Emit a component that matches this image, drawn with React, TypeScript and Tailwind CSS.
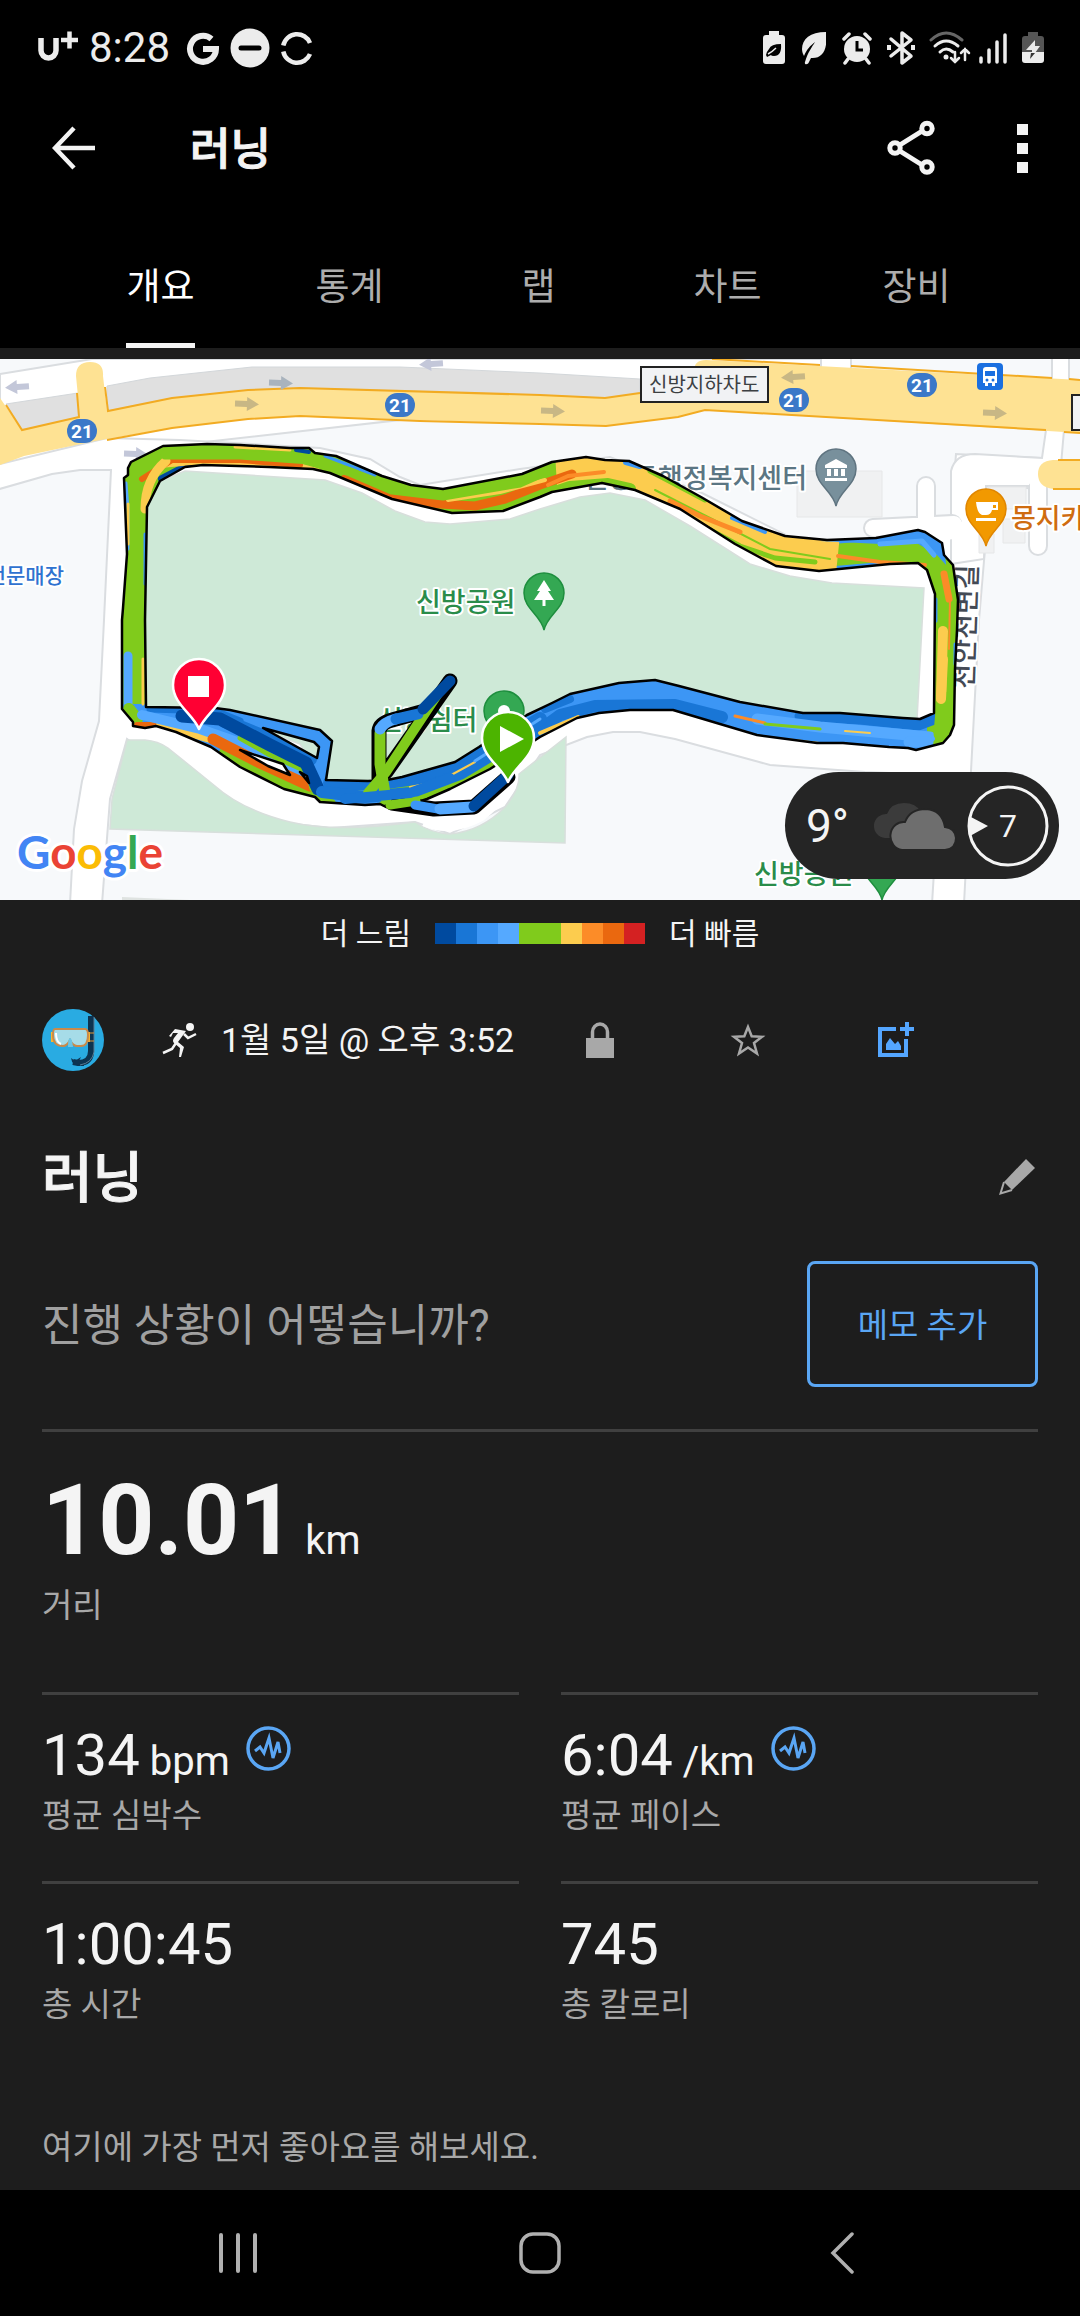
import { useState } from 'react';
import type { ReactNode } from 'react';

const tabs = ['개요', '통계', '랩', '차트', '장비'];

const paceColors = [
  'bg-[#004a9f]',
  'bg-[#1976d6]',
  'bg-[#3c96f5]',
  'bg-[#55a9ff]',
  'bg-[#80cb1c]',
  'bg-[#80cb1c]',
  'bg-[#fccc4e]',
  'bg-[#fc8c28]',
  'bg-[#ea680f]',
  'bg-[#d42122]',
];

const metrics = [
  { value: '134', unit: 'bpm', label: '평균 심박수', chart: true },
  { value: '6:04', unit: '/km', label: '평균 페이스', chart: true },
  { value: '1:00:45', unit: '', label: '총 시간', chart: false },
  { value: '745', unit: '', label: '총 칼로리', chart: false },
];

function StatusBar() {
  return (
    <div className="flex h-24 items-center justify-between pl-9 pr-9 text-[#ececec]">
      <div className="flex items-center">
        <svg className="h-10 w-[44px]" viewBox="0 0 44 40" fill="none" stroke="currentColor">
          <path d="M5 10v12.500a7.500 7.500 0 0 0 15 0V10" strokeWidth="5.500" />
          <path d="M25 12h17M33.500 3.500v17" strokeWidth="4.500" />
        </svg>
        <span className="ml-[9px] text-[42px] leading-10">8:28</span>
        <svg className="ml-4 h-10 w-[34px]" viewBox="0 0 34 40" fill="none" stroke="currentColor" strokeWidth="6">
          <path d="M25.500 11A13 13 0 1 0 30 21H17" />
        </svg>
        <svg className="ml-[10px] h-10 w-10" viewBox="0 0 40 40">
          <circle cx="20" cy="20" r="19.500" fill="currentColor" />
          <path d="M11 20h18" stroke="#000" strokeWidth="5" strokeLinecap="round" />
        </svg>
        <svg className="ml-[10px] h-10 w-[34px]" viewBox="0 0 34 40" fill="none" stroke="currentColor" strokeWidth="4.500">
          <path d="M3.300 17.500A14 14 0 0 1 30 15M3.300 23.500A14 14 0 0 0 30 26" />
        </svg>
      </div>
      <div className="flex items-center">
        <svg className="h-9 w-[22px]" viewBox="0 0 22 36">
          <path d="M6 1h10v4h3q3 0 3 3v23q0 3-3 3H3q-3 0-3-3V8q0-3 3-3h3z" fill="currentColor" />
          <path d="M3 25q1-4 3-6 2-5 12-5 1 12-7 12-3 0-3-1l-4 2z" fill="#000" />
          <path d="M5 24q4-2 8-6" stroke="#ececec" strokeWidth="1.500" fill="none" />
        </svg>
        <svg className="ml-[17px] h-9 w-6" viewBox="0 0 24 36">
          <path d="M24 2C8 2 0 9 0 19c0 3 1 5 2 7 3-7 6-10 11-14-3 5-7 10-10 20-1 3 3 3 4 0l2-4c12 1 17-9 15-26z" fill="currentColor" />
        </svg>
        <svg className="ml-4 h-9 w-[30px]" viewBox="0 0 30 36" fill="none" stroke="currentColor">
          <circle cx="15" cy="19" r="13" fill="currentColor" stroke="none" />
          <path d="M2 9l5-5M28 9l-5-5M6 29l-3 4M24 29l3 4" strokeWidth="3.500" strokeLinecap="round" />
          <path d="M15 11v9h6" stroke="#000" strokeWidth="3" />
        </svg>
        <svg className="ml-[15px] h-9 w-7" viewBox="0 0 28 36" fill="none" stroke="currentColor" strokeWidth="3.500">
          <path d="M4 9l20 17-9 7V3l9 7L4 26" strokeLinejoin="round" strokeLinecap="round" />
          <path d="M2 15v5M26 15v5" strokeWidth="4" />
        </svg>
        <svg className="ml-[14px] h-9 w-[42px]" viewBox="0 0 42 36" fill="none" stroke="currentColor" strokeLinecap="round">
          <path d="M2 10q15-14 31 0" stroke="#666" strokeWidth="3" />
          <path d="M6 16q11-10 23 0M11 22q6-6 13 0" strokeWidth="3" />
          <circle cx="17" cy="27" r="2.500" fill="currentColor" stroke="none" />
          <path d="M26 22v10m-4-4l4 4 4-4M36 30V19m-4 4l4-4 4 4" strokeWidth="2.500" />
        </svg>
        <svg className="ml-2 h-9 w-7" viewBox="0 0 28 36" stroke="currentColor" strokeWidth="3.500" strokeLinecap="round">
          <path d="M2 32v-4M10 32V20M18 32V12M26 32V5" />
        </svg>
        <svg className="ml-[15px] h-9 w-[22px]" viewBox="0 0 22 36">
          <path d="M6 2h10v4h3q3 0 3 3v14H0V9q0-3 3-3h3z" fill="#555" />
          <path d="M0 22h22v8q0 3-3 3H3q-3 0-3-3z" fill="currentColor" />
          <path d="M13 10l-9 10h6v3h3l5-7h-5z" fill="currentColor" />
          <path d="M9 23l-1 6 5-6z" fill="#333" />
        </svg>
      </div>
    </div>
  );
}

function AppBar() {
  return (
    <div className="flex h-[104px] items-center px-[42px] text-[#f4f4f4]">
      <button type="button" aria-label="뒤로" className="flex h-16 w-16 items-center justify-center">
        <svg className="h-11 w-11" viewBox="0 0 44 44" fill="none" stroke="currentColor" strokeWidth="4.500">
          <path d="M22 2L3 22l19 20M3 22h40" />
        </svg>
      </button>
      <h1 className="ml-[84px] flex-1 pt-1 text-[44px] leading-[60px] font-medium [-webkit-text-stroke:1px]">러닝</h1>
      <button type="button" aria-label="공유" className="flex h-16 w-16 items-center justify-center">
        <svg className="h-14 w-12" viewBox="0 0 48 56" fill="none" stroke="currentColor">
          <path d="M8 28l32-20M8 28l32 20" strokeWidth="5" />
          <g fill="#000" strokeWidth="5">
            <circle cx="8" cy="28" r="5.200" />
            <circle cx="40" cy="8.500" r="5.200" />
            <circle cx="40" cy="47" r="5.200" />
          </g>
        </svg>
      </button>
      <button type="button" aria-label="더보기" className="ml-[63px] flex h-16 w-8 flex-col items-center justify-center gap-2">
        <span className="h-[11px] w-[11px] bg-current" />
        <span className="h-[11px] w-[11px] bg-current" />
        <span className="h-[11px] w-[11px] bg-current" />
      </button>
    </div>
  );
}

function Tabs() {
  const [active, setActive] = useState(tabs[0]);
  return (
    <nav className="grid h-[148px] grid-cols-5 items-end pr-[69px] pl-[66px]">
      {tabs.map((tab) => (
        <div key={tab} className="flex justify-center">
          <button
            type="button"
            aria-pressed={tab === active}
            onClick={() => setActive(tab)}
            className={
              'h-[124px] border-b-[5px] pt-2 text-[37px] leading-[44px] ' +
              (tab === active ? 'border-[#f4f4f4] text-white' : 'border-transparent text-[#adadad]')
            }
          >
            {tab}
          </button>
        </div>
      ))}
    </nav>
  );
}

const ringOuter =
  'M122 350V261L123 249 127 195 124 119 128 116V109L131 103 163 87 207 85 240 86 290 89 309 89 315 94 336 97 382 117 411 126 443 130 522 115 552 103 586 98 605 101 629 102 663 117 701 138 742 162 785 177 827 181 876 179 918 171 925 173 942 184 944 196 953 206 958 241 957 271 955 310 954 366 950 376 943 384 916 391 908 389 889 388 843 384 817 384 757 376 673 351 630 351 599 354 577 359 540 378 490 410 450 430 427 440 400 449 386 448 380 445 365 446 320 443 315 438 284 430 240 408 211 388 176 373 156 367 145 369 133 367V363Z';
const ringInner =
  'M146 348L145 261 147 148 160 122 185 108 203 106 269 108 313 110 330 114 392 140 452 154 503 152 540 138 552 133 602 124 635 131 680 150 735 185 776 207 819 212 890 205 918 204 927 211 935 235 934 354 920 360 903 359 840 354 803 354 740 343 679 327 655 321 619 324 570 335 552 344 527 356 479 388 455 403 402 418 387 421 368 422 326 421 332 382 320 371 230 351 215 349Z';
const ringGaps = 'M263 369L314 383 319 388 317 399ZM240 391L283 405 290 416 268 407ZM300 413L307 417 309 424Z';
const ring = `${ringOuter}${ringInner}${ringGaps}`;

function Arrow({ x, y, left, color }: { x: number; y: number; left?: boolean; color: string }) {
  return (
    <path
      d="M-12-3H0V-7L12 0 0 7V3H-12Z"
      fill={color}
      transform={`translate(${x} ${y})${left ? ' rotate(176)' : ' rotate(2)'}`}
    />
  );
}

function PoiPin({ x, y, fill, stroke, children }: { x: number; y: number; fill: string; stroke: string; children?: ReactNode }) {
  return (
    <g transform={`translate(${x} ${y})`}>
      <path d="M0 37C-3 22-20 16-20 0a20 20 0 0 1 40 0C20 16 3 22 0 37Z" fill={fill} stroke={stroke} strokeWidth="1.500" />
      {children}
    </g>
  );
}

function RoutePin({ x, y, fill, children }: { x: number; y: number; fill: string; children: ReactNode }) {
  return (
    <g transform={`translate(${x} ${y})`}>
      <path d="M0 43C-6 28-26 18-26-1a26 26 0 0 1 52 0C26 18 6 28 0 43Z" fill={fill} stroke="#fff" strokeWidth="2.500" />
      {children}
    </g>
  );
}

function Roads() {
  return (
    <g>
      <rect width="1080" height="541" fill="#f7f9fb" />
      {/* white streets */}
      <path d="M0 15L92 0H821V8L640 34 0 106Z" fill="#fff" stroke="#dadde0" strokeWidth="2" />
      <path
        d="M-4 131L52 115 80 111H111L104 261 99 362 82 422 74 470 70 545H102L110 440 127 380 140 390 250 460 330 469 415 463 450 475 505 448 540 396 587 378 613 373 640 373 675 380 770 406 865 413 940 416 932 545H964L971 412 979 261 985 190 986 127 1046 130 1061 100 956 95 951 160 866 186 800 183 700 133 610 98 520 110 420 126 400 118 370 100 320 89 180 81 107 79-4 106Z"
        fill="#fff"
        stroke="#dadde0"
        strokeWidth="2"
      />
      <path d="M951 172V112Q955 95 975 95L1042 99 1046 71H1064L1061 106H1035V127H986L984 200 951 205Z" fill="#fff" stroke="#dadde0" strokeWidth="2" />
      <g fill="none" strokeLinecap="round">
        <path d="M926 127V170M873 169L952 165M1038 130V187" stroke="#dadde0" strokeWidth="20" />
        <path d="M926 127V170M873 169L954 165M1038 112V187M936 174L970 170" stroke="#fff" strokeWidth="16" />
      </g>
      <path d="M821-2H851V12H821ZM1052-2H1069V24H1052Z" fill="#fff" stroke="#dadde0" strokeWidth="2" />
      {/* buildings */}
      <path d="M797 112H882V158H797ZM988 128H1026V150H988ZM1003 160H1025V184H1003ZM979 175H994V194H979Z" fill="#f0f1f2" stroke="#e6e7e8" />
      {/* underpass */}
      <path d="M6 45L78 34 80 58 22 71ZM107 27L150 19 252 8H400L540 14 640 20V34L605 39 540 36 300 29 172 39 107 52Z" fill="#e0e0e0" stroke="#d3d7da" />
      {/* highway */}
      <path
        d="M0 39L22 71 80 58 76 17Q76 3 90 3T103 17L107 52 172 39 248 31 300 29 540 36 605 39 640 34 694 12Q694 1 706 1L1080 21V74L705 51 678 58 606 67 540 65 300 57 248 60 172 69 95 82 24 97 0 106Z"
        fill="#fee293"
      />
      <path d="M1080 101H1053Q1038 102 1038 115T1053 130H1080Z" fill="#fee293" />
      <path
        d="M6 46L22 71 79 58 77 34M105 28L108 52 172 39 248 31 300 29 540 36 605 39 640 34M712 0L820 6M851 7L1052 19M1069 20L1080 21M107 81L172 69 248 60 300 57 420 62 540 65 606 67 678 58 705 51 1046 71M1064 73L1080 74M1058 101H1080M1053 130H1080"
        fill="none"
        stroke="#f2ab22"
        strokeWidth="2"
      />
      {/* parks */}
      <g fill="#cee9d7" stroke="#d8dfdc" strokeWidth="1.500">
        <path d="M135 355L146 150 160 122 185 112 325 121 362 134 395 152 425 163 450 165 510 160 540 150 580 138 610 134 645 141 690 167 750 205 790 217 832 224 924 229 917 361 850 365 740 350 655 335 590 345 460 402 395 426H325L300 385 220 355Z" />
        <path d="M127 381H145Q158 382 168 389L215 427Q242 451 290 463 335 474 415 463 430 474 450 475 482 472 505 448 520 430 519 415L566 378 565 484 110 470 112 440Z" />
      </g>
      <path d="M122 541V538L190 541Z" fill="#dfe3e1" />
      <path d="M425 461Q450 472 480 456 513 430 510 405" fill="none" stroke="#fff" strokeWidth="13" />
      <Arrow x={17} y={28} left color="#c3c7d9" />
      <Arrow x={281} y={24} color="#a9b3bd" />
      <Arrow x={431} y={5} left color="#c3c7d9" />
      <Arrow x={136} y={95} color="#c3c7d9" />
      <Arrow x={247} y={45} color="#c8b785" />
      <Arrow x={553} y={52} color="#c8b785" />
      <Arrow x={793} y={18} left color="#c8b785" />
      <Arrow x={995} y={54} color="#c8b785" />
    </g>
  );
}

function Places() {
  const shields = [
    [82, 72],
    [400, 46],
    [794, 41],
    [922, 26],
  ];
  return (
    <g>
      {shields.map(([x, y]) => (
        <g key={x}>
          <rect x={x - 15} y={y - 12} width="30" height="24" rx="12" fill="#3b78c8" />
          <text x={x} y={y + 7} textAnchor="middle" fontSize="19" fontWeight="700" fill="#fff">
            21
          </text>
        </g>
      ))}
      <rect x="641" y="8" width="127" height="35" fill="#f1f2f4" stroke="#222" strokeWidth="2" />
      <text x="649" y="33" fontSize="20" fill="#3c4043">
        신방지하차도
      </text>
      <rect x="1072" y="36" width="40" height="35" fill="#f1f2f4" stroke="#222" strokeWidth="2" />
      <rect x="977" y="4" width="26" height="27" rx="4" fill="#1a6fe0" />
      <path d="M983 11q0-3 3-3h8q3 0 3 3v13h-2v3h-3v-3h-4v3h-3v-3h-2z" fill="#fff" />
      <path d="M985 12h10v5h-10z" fill="#1a6fe0" />
      <circle cx="987" cy="21" r="1.500" fill="#1a6fe0" />
      <circle cx="993" cy="21" r="1.500" fill="#1a6fe0" />

      <g fontSize="27" fontWeight="500" stroke="#fff" strokeWidth="4" strokeLinejoin="round" style={{ paintOrder: 'stroke' }}>
        <text x="416" y="253" fill="#2a8c4a">
          신방공원
        </text>
        <text x="754" y="525" fill="#2a8c4a">
          신방공원
        </text>
        <text x="378" y="371" fill="#2a8c4a">
          신방쉼터
        </text>
        <text x="807" y="129" textAnchor="end" fill="#5b7683">
          신방동행정복지센터
        </text>
        <text x="1011" y="169" fill="#cf6c10">
          몽지카페
        </text>
        <text x="64" y="224" fontSize="21" textAnchor="end" fill="#2f72d0">
          전문매장
        </text>
        <text transform="translate(973 330) rotate(-88)" fill="#444a55">
          천안천변길
        </text>
      </g>

      <PoiPin x={544} y={234} fill="#34a853" stroke="#1e8e3e">
        <path d="M0-13L7-2H4L10 7H1.500V13H-1.500V7H-10L-4-2H-7Z" fill="#fff" />
      </PoiPin>
      <PoiPin x={504} y={352} fill="#34a853" stroke="#1e8e3e">
        <circle r="6" fill="#fff" />
      </PoiPin>
      <PoiPin x={882} y={504} fill="#34a853" stroke="#1e8e3e" />
      <PoiPin x={836} y={110} fill="#78909c" stroke="#5f7480">
        <path d="M0-10L11-4V-1H-11V-4ZM-9 0H-5V7H-9ZM-2 0H2V7H-2ZM5 0H9V7H5ZM-11 9H11V12H-11Z" fill="#fff" />
      </PoiPin>
      <PoiPin x={986} y={150} fill="#f29900" stroke="#e08600">
        <path d="M-10-7H12V1H6Q5 6 0 6H-4Q-9 4-10-7ZM-10 9H10V12H-10Z" fill="#fff" />
        <path d="M7-4H10V-1H7Z" fill="#f29900" />
      </PoiPin>
    </g>
  );
}

function Route() {
  return (
    <g fill="none" strokeLinejoin="round" strokeLinecap="round">
      <clipPath id="ring">
        <path d={ring} clipRule="evenodd" />
      </clipPath>
      <g clipPath="url(#ring)">
        <path d={ring} fill="#3c96f5" fillRule="evenodd" />
        {/* left and upper legs */}
        <path d="M134 345V112L165 97 210 96 310 99 390 128 448 142 520 130 560 118" stroke="#80cb1c" strokeWidth="46" strokeLinecap="butt" />
        <path d="M944 205V372" stroke="#80cb1c" strokeWidth="34" />
        <path d="M834 196L880 192 925 196 940 215" stroke="#80cb1c" strokeWidth="22" />
        <path d="M556 110L590 108 640 116 700 150 760 187 838 195" stroke="#fccc4e" strokeWidth="38" strokeLinecap="butt" />
        <path d="M126 124L128 150 128 190" stroke="#55a9ff" strokeWidth="3" />
        <path d="M128 145V185" stroke="#fccc4e" strokeWidth="3" />
        <path d="M145 175V225" stroke="#3c96f5" strokeWidth="3" />
        <path d="M162 120L187 107" stroke="#004a9f" strokeWidth="8" />
        <path d="M165 106L200 103 300 107 318 112" stroke="#fccc4e" strokeWidth="5" />
        <path d="M142 120L172 101 240 101 300 106" stroke="#ea680f" strokeWidth="6" />
        <path d="M145 150Q145 120 166 102" stroke="#fccc4e" strokeWidth="9" />
        <path d="M235 88L290 91" stroke="#fccc4e" strokeWidth="3" />
        <path d="M296 91L309 93" stroke="#004a9f" strokeWidth="4" />
        <path d="M325 97L375 116" stroke="#3c96f5" strokeWidth="3" />
        <path d="M345 120L392 139 440 145 475 147 505 140 540 126 572 115" stroke="#ea680f" strokeWidth="9" />
        <path d="M448 141L500 133 545 121" stroke="#fccc4e" strokeWidth="4" />
        <path d="M165 96L240 96 310 101 350 113 392 131 443 137 520 124 545 113" stroke="#80cb1c" strokeWidth="9" />
        <path d="M535 140L570 128 608 125 630 130" stroke="#80cb1c" strokeWidth="12" />
        <path d="M548 126L568 117 604 113" stroke="#fc8c28" strokeWidth="4" />
        <path d="M626 103L640 107" stroke="#3c96f5" strokeWidth="6" />
        <path d="M650 112L705 141" stroke="#80cb1c" strokeWidth="5" />
        <path d="M655 131L712 160 770 190 830 200" stroke="#80cb1c" strokeWidth="2" />
        <path d="M690 160L740 187 775 199 815 203" stroke="#80cb1c" strokeWidth="5" />
        <path d="M670 142L700 157 740 173" stroke="#fc8c28" strokeWidth="5" />
        <path d="M732 159L765 173" stroke="#3c96f5" strokeWidth="4" />
        <path d="M838 197L880 203 925 206" stroke="#fc8c28" strokeWidth="4" />
        <path d="M820 182L880 185 915 183 937 196 946 206 944 180 918 168Z" fill="#3c96f5" />
        <path d="M880 185L922 182 934 196" stroke="#55a9ff" strokeWidth="5" />
        <path d="M944 215L949 240" stroke="#fc8c28" strokeWidth="7" />
        <path d="M950 240L949 290" stroke="#fc8c28" strokeWidth="2" />
        <path d="M943 272L941 340" stroke="#fccc4e" strokeWidth="10" />
        <path d="M955 285V305" stroke="#3c96f5" strokeWidth="3" />
        <path d="M936 240V262" stroke="#3c96f5" strokeWidth="3" />
        {/* lower right leg */}
        <path d="M500 400L560 356 595 347 675 346 722 358" stroke="#1976d6" strokeWidth="12" />
        <path d="M545 350L570 340" stroke="#1976d6" strokeWidth="8" />
        <path d="M800 357L860 360 918 366 934 360" stroke="#1976d6" strokeWidth="11" />
        <path d="M757 360L820 368 930 378" stroke="#55a9ff" strokeWidth="11" />
        <path d="M909 383L928 383" stroke="#55a9ff" strokeWidth="11" />
        <path d="M735 357L765 364" stroke="#fc8c28" strokeWidth="3" />
        <path d="M765 365L820 370" stroke="#80cb1c" strokeWidth="3" />
        <path d="M845 372L870 374M785 380L820 384" stroke="#fccc4e" strokeWidth="2" />
        <path d="M941 375L944 340" stroke="#80cb1c" strokeWidth="15" />
        <path d="M943 300L941 340" stroke="#fccc4e" strokeWidth="10" />
        <path d="M540 374L578 358" stroke="#fccc4e" strokeWidth="4" />
        {/* lower left leg */}
        <path d="M128 297V345" stroke="#55a9ff" strokeWidth="9" />
        <path d="M143 300V345" stroke="#fccc4e" strokeWidth="3" />
        <path d="M129 350L137 360" stroke="#80cb1c" strokeWidth="12" />
        <path d="M137 366L160 366" stroke="#ea680f" strokeWidth="6" />
        <path d="M150 350L215 352 240 362" stroke="#1976d6" strokeWidth="7" />
        <path d="M160 366L210 380" stroke="#fccc4e" strokeWidth="8" />
        <path d="M142 356L200 370 240 384 300 412" stroke="#55a9ff" strokeWidth="10" />
        <path d="M225 394L290 427 330 445" stroke="#80cb1c" strokeWidth="12" />
        <path d="M213 380L260 404 310 427" stroke="#ea680f" strokeWidth="11" />
        <path d="M225 362L262 377 310 400" stroke="#1976d6" strokeWidth="14" />
        <path d="M240 379L270 396 308 413 312 430" stroke="#80cb1c" strokeWidth="5" />
        <path d="M182 357L220 360 270 386 306 404 318 430" stroke="#004a9f" strokeWidth="13" />
        <path d="M330 424L400 424 470 402 540 360" stroke="#1976d6" strokeWidth="14" />
        <path d="M385 446L410 445 445 430 500 400" stroke="#80cb1c" strokeWidth="12" />
        <path d="M322 430L370 434 420 427 470 408" stroke="#80cb1c" strokeWidth="3" />
        <path d="M322 433L365 438 410 434 460 415 510 385" stroke="#1976d6" strokeWidth="12" />
        <path d="M410 428L440 422 475 403" stroke="#fccc4e" strokeWidth="2" />
        <path d="M475 402L540 360" stroke="#55a9ff" strokeWidth="3" />
      </g>
      <path d={ring} stroke="#000" strokeWidth="2.500" />
      {/* detours inside the loop */}
      <path d="M379 420V372Q380 364 392 361L421 353M386 413L450 322M392 444L434 450 474 448 508 418" stroke="#000" strokeWidth="15" />
      <path d="M368 434L386 413 437 336" stroke="#80cb1c" strokeWidth="10" />
      <path d="M386 440L380 405V374" stroke="#80cb1c" strokeWidth="11" />
      <path d="M380 370Q384 363 396 360" stroke="#55a9ff" strokeWidth="11" />
      <path d="M396 360L418 355" stroke="#1976d6" strokeWidth="11" />
      <path d="M423 350L450 322" stroke="#004a9f" strokeWidth="11" />
      <path d="M390 446L416 442" stroke="#80cb1c" strokeWidth="9" />
      <path d="M415 446L438 450" stroke="#3c96f5" strokeWidth="9" />
      <path d="M440 450L472 448" stroke="#55a9ff" strokeWidth="11" />
      <path d="M474 447L508 416" stroke="#004a9f" strokeWidth="11" />
      <path d="M345 440L410 434 450 419" stroke="#1976d6" strokeWidth="10" />
      <RoutePin x={199} y={327} fill="#ff0033">
        <rect x="-11" y="-10" width="21" height="21" fill="#fff" />
      </RoutePin>
      <RoutePin x={508} y={380} fill="#4cb400">
        <path d="M-8-13L16 0-8 13Z" fill="#fff" />
      </RoutePin>
    </g>
  );
}

function Weather() {
  return (
    <div className="absolute right-[21px] bottom-[21px] flex h-[107px] w-[274px] items-center rounded-full bg-[#252525] pr-[10px] pl-[21px] text-[#f4f4f4]">
      <span className="flex-1 text-[46px] leading-[54px]">9°</span>
      <svg className="h-12 w-[84px]" viewBox="0 0 84 48">
        <path d="M12 36a12 12 0 0 1 2-24q4-11 17-11 12 0 17 9v26z" fill="#3b3b3b" />
        <path d="M29 48a13 14 0 0 1 3-28q5-13 21-13 16 1 19 18 10 1 11 11 0 11-11 12z" fill="#6e6e6e" stroke="#252525" strokeWidth="2" />
      </svg>
      <div className="ml-[10px] flex h-[82px] w-[82px] items-center justify-center">
        <svg className="absolute h-[82px] w-[82px]" viewBox="0 0 82 82">
          <circle cx="41" cy="41" r="39" fill="none" stroke="#f4f4f4" strokeWidth="3" />
          <path d="M2 31L21 41 3 51Z" fill="#f4f4f4" />
        </svg>
        <span className="text-[32px] leading-10">7</span>
      </div>
    </div>
  );
}

function RouteMap() {
  return (
    <div className="relative h-[541px] w-full overflow-hidden">
      <svg className="h-full w-full" viewBox="0 0 1080 541" preserveAspectRatio="xMidYMid slice">
        <Roads />
        <Places />
        <Route />
        <text
          x="17"
          y="510"
          fontSize="46"
          stroke="#fff"
          strokeWidth="6"
          strokeLinejoin="round"
          className="font-['Lato',sans-serif] font-bold"
          style={{ paintOrder: 'stroke' }}
        >
          <tspan fill="#4285f4">G</tspan>
          <tspan fill="#ea4335">o</tspan>
          <tspan fill="#fbbc05">o</tspan>
          <tspan fill="#4285f4">g</tspan>
          <tspan fill="#34a853">l</tspan>
          <tspan fill="#ea4335">e</tspan>
        </text>
      </svg>
      <Weather />
    </div>
  );
}

function PaceLegend() {
  return (
    <div className="flex h-[66px] items-center justify-center gap-6 text-[30px] leading-10 text-[#f4f4f4]">
      <span className="pt-[2px]">더 느림</span>
      <div className="flex h-[21px] w-[210px]">
        {paceColors.map((color, i) => (
          <span key={i} className={`flex-1 ${color}`} />
        ))}
      </div>
      <span className="pt-[2px]">더 빠름</span>
    </div>
  );
}

function Avatar() {
  return (
    <svg className="h-[62px] w-[62px]" viewBox="0 0 62 62">
      <circle cx="31" cy="31" r="31" fill="#29abe2" />
      <path d="M49 7V42Q49 54 36 54L31 53" fill="none" stroke="#0d3350" strokeWidth="6" />
      <path d="M29 49l4 3 6-4-2 4h5v5q-12 1-13-8z" fill="#0d3350" />
      <path d="M52 8V43Q50 54 38 56" fill="none" stroke="#5b7d94" strokeWidth="1" />
      <path d="M9 23h3v10H9zM45 23h3v10h-3z" fill="#f7b733" />
      <path d="M13 20H43Q46 20 46 26 46 37 39 37H35Q31 37 28 31 25 37 21 37 11 37 11 26 11 20 13 20Z" fill="#a6dce8" stroke="#c98a4a" strokeWidth="2" />
      <path d="M14 24q0 9 5 11" fill="none" stroke="#fff" strokeWidth="2" />
      <path d="M26 38q0-9 2-9t3 9z" fill="#6cc5e4" />
      <path d="M46 24h6M46 32h6" stroke="#e09a3a" strokeWidth="1" />
    </svg>
  );
}

function ActivityInfo() {
  return (
    <div className="flex h-[148px] items-center">
      <div className="flex w-[484px] items-center">
        <Avatar />
        <svg className="ml-[58px] h-9 w-9" viewBox="0 0 36 36" fill="none" stroke="#f4f4f4">
          <circle cx="28" cy="5" r="4" fill="#f4f4f4" stroke="none" />
          <path d="M13 7l11 2-8 11 6 5-3 10-2 0 1-9-6-5q-2-2 0-5l4-5-5 0-2 4-2-1z" fill="#f4f4f4" stroke="none" />
          <path d="M22 12l4 4 8-4" strokeWidth="2.500" />
          <path d="M14 21l-4 6-9 4" strokeWidth="2.500" />
        </svg>
        <span className="ml-[23px] text-[34px] leading-10 whitespace-nowrap text-[#f4f4f4]">1월 5일 @ 오후 3:52</span>
      </div>
      <button type="button" aria-label="공개 범위" className="flex w-[148px] justify-center">
        <svg className="h-9 w-7" viewBox="0 0 28 36">
          <path d="M6.500 18V10a7.500 8 0 0 1 15 0v8" fill="none" stroke="#a8a8a8" strokeWidth="3.500" />
          <path d="M0 16h28v20H0z" fill="#a8a8a8" />
        </svg>
      </button>
      <button type="button" aria-label="즐겨찾기" className="flex w-[148px] justify-center">
        <svg className="h-9 w-9" viewBox="0 0 36 36" fill="none" stroke="#a8a8a8" strokeWidth="2.500">
          <path d="M18 5l3.700 9.300 10.300.5-8 6.200 3 10.500-9-6-9 6 3-10.500-8-6.200 10.300-.5z" />
        </svg>
      </button>
      <button type="button" aria-label="사진 추가" className="flex w-[148px] justify-center">
        <svg className="h-9 w-9" viewBox="0 0 36 36" fill="none" stroke="#54a6ff" strokeWidth="4">
          <path d="M18 7H2v26h26V17M29 0v14M22 7h14" />
          <path d="M8 28v-6l4-6 5 6 3-3 3 5v4z" fill="#54a6ff" stroke="none" />
        </svg>
      </button>
    </div>
  );
}

function ChartIcon() {
  return (
    <svg className="ml-4 h-[45px] w-[45px]" viewBox="0 0 45 45" fill="none" stroke="#5aa6f4">
      <circle cx="22.500" cy="22.500" r="20.500" strokeWidth="3.500" />
      <path d="M9 25l5-4 4 6 5-15 4 20 5-16 2 11" strokeWidth="3" />
    </svg>
  );
}

function Metrics() {
  return (
    <dl className="grid grid-cols-2 gap-x-[42px]">
      {metrics.map((metric) => (
        <div key={metric.label} className="flex flex-col-reverse border-t-[3px] border-[#404040] pt-[31px] pb-[45px]">
          <dt className="mt-3 text-[33px] leading-10 text-[#a8a8a8]">{metric.label}</dt>
          <dd className="flex h-[58px] items-start text-[#f4f4f4]">
            <span className="text-[58px] leading-[58px] whitespace-nowrap">
              {metric.value}
              {metric.unit && <span className="text-[40px] leading-none"> {metric.unit}</span>}
            </span>
            {metric.chart && (
              <button type="button" aria-label={`${metric.label} 차트`}>
                <ChartIcon />
              </button>
            )}
          </dd>
        </div>
      ))}
    </dl>
  );
}

function SystemNav() {
  return (
    <div className="grid h-[126px] grid-cols-[1fr_132px_1fr] items-center bg-black px-[100px] text-[#b0b0b0]">
      <button type="button" aria-label="최근 앱" className="flex w-[276px] justify-center">
        <svg className="h-[42px] w-[42px]" viewBox="0 0 42 42" stroke="currentColor" strokeWidth="4" strokeLinecap="round">
          <path d="M4 3v36M21 3v36M38 3v36" />
        </svg>
      </button>
      <button type="button" aria-label="홈" className="flex justify-center">
        <svg className="h-[42px] w-[42px]" viewBox="0 0 42 42" fill="none" stroke="currentColor" strokeWidth="3.500">
          <rect x="2" y="2" width="38" height="38" rx="12" />
        </svg>
      </button>
      <button type="button" aria-label="이전" className="ml-auto flex w-[276px] justify-center">
        <svg className="h-[42px] w-6" viewBox="0 0 24 42" fill="none" stroke="currentColor" strokeWidth="3.500" strokeLinecap="round">
          <path d="M22 2L3 21l19 19" />
        </svg>
      </button>
    </div>
  );
}

export default function App() {
  return (
    <div className="flex min-h-screen flex-col bg-[#1d1d1d] font-['Roboto','Noto_Sans_CJK_KR',sans-serif]">
      <header className="bg-black">
        <StatusBar />
        <AppBar />
        <Tabs />
      </header>

      <main className="flex-1 pt-[11px]">
        <RouteMap />
        <PaceLegend />

        <div className="px-[42px]">
          <ActivityInfo />

          <div className="flex h-[126px] items-center justify-between">
            <h2 className="pt-[2px] text-[55px] leading-[66px] font-medium text-[#f4f4f4] [-webkit-text-stroke:1px]">러닝</h2>
            <button type="button" aria-label="이름 편집" className="pr-[3px]">
              <svg className="h-9 w-9" viewBox="0 0 36 36">
                <path d="M27 0l9 9-23 22-8-8z" fill="#a8a8a8" />
                <path d="M5 23L1.500 34.500 13 31" fill="none" stroke="#a8a8a8" strokeWidth="2" />
              </svg>
            </button>
          </div>

          <form className="flex h-[168px] items-center justify-between" onSubmit={(e) => e.preventDefault()}>
            <label htmlFor="note" className="sr-only">
              메모
            </label>
            <input
              id="note"
              type="text"
              placeholder="진행 상황이 어떻습니까?"
              className="min-w-0 flex-1 bg-transparent pt-1 text-[44px] leading-[56px] text-[#f4f4f4] placeholder-[#a0a0a0] focus:outline-none"
            />
            <button
              type="submit"
              className="h-[126px] w-[231px] rounded-lg border-[3px] border-[#5aa6f4] pt-1 text-[33px] leading-10 text-[#5aa6f4]"
            >
              메모 추가
            </button>
          </form>

          <div className="mt-[21px] border-t-[3px] border-[#404040] pt-10 pb-[66px]">
            <p className="text-[98px] leading-[98px] font-bold text-[#f4f4f4]">
              10.01
              <span className="text-[40px] leading-none font-normal"> km</span>
            </p>
            <p className="mt-4 text-[33px] leading-10 text-[#a8a8a8]">거리</p>
          </div>

          <Metrics />

          <p className="pt-[58px] pb-[22px] text-[33px] leading-10 text-[#a8a8a8]">여기에 가장 먼저 좋아요를 해보세요.</p>
        </div>
      </main>

      <SystemNav />
    </div>
  );
}
